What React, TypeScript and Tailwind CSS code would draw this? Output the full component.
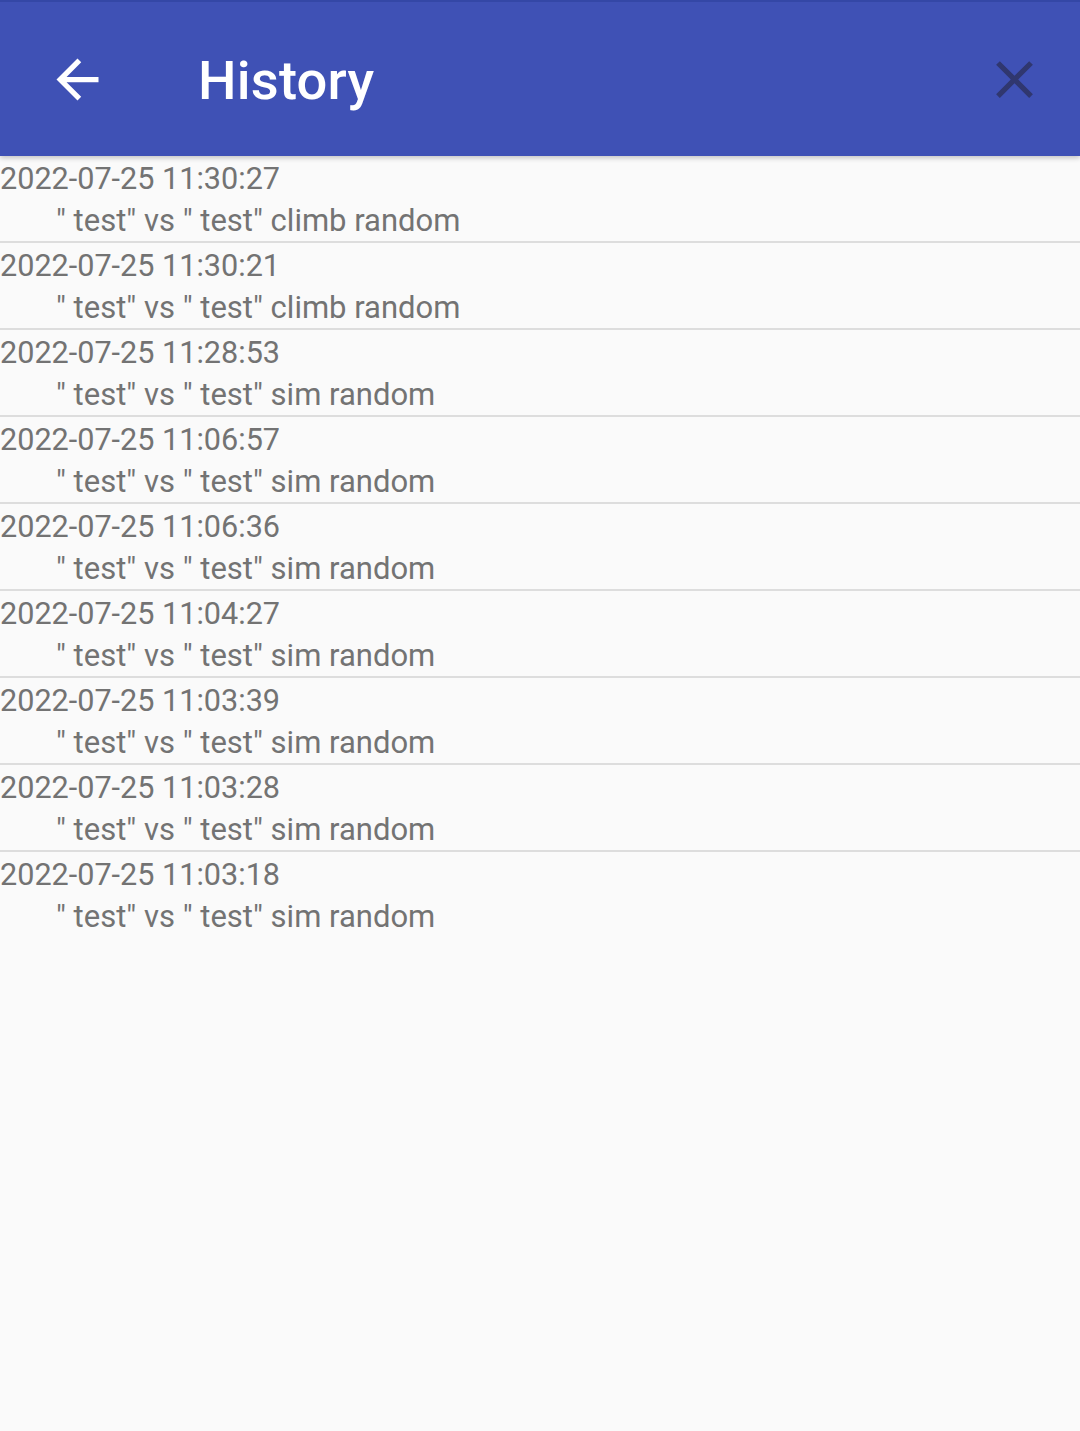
import React from "react";

const rows = [
  ["2022-07-25 11:30:27", "\" test\" vs \" test\" climb random"],
  ["2022-07-25 11:30:21", "\" test\" vs \" test\" climb random"],
  ["2022-07-25 11:28:53", "\" test\" vs \" test\" sim random"],
  ["2022-07-25 11:06:57", "\" test\" vs \" test\" sim random"],
  ["2022-07-25 11:06:36", "\" test\" vs \" test\" sim random"],
  ["2022-07-25 11:04:27", "\" test\" vs \" test\" sim random"],
  ["2022-07-25 11:03:39", "\" test\" vs \" test\" sim random"],
  ["2022-07-25 11:03:28", "\" test\" vs \" test\" sim random"],
  ["2022-07-25 11:03:18", "\" test\" vs \" test\" sim random"],
];

export default function App() {
  return (
    <div
      className="w-[1080px] h-[1431px] bg-[#fafafa] overflow-hidden"
      style={{ fontFamily: "Roboto, 'Noto Sans', sans-serif" }}
    >
      <div className="relative z-10 h-[156px] bg-[#3f51b5] border-t-2 border-[#3447a6] shadow-[0_2px_5px_rgba(0,0,0,0.22)] flex items-center">
        <div className="w-[63px] h-[63px] ml-[46px] flex items-center justify-center">
          <svg viewBox="0 0 24 24" width="63" height="63" fill="#ffffff">
            <path d="M20 11H7.83l5.59-5.59L12 4l-8 8 8 8 1.41-1.41L7.83 13H20v-2z" />
          </svg>
        </div>
        <div className="ml-[89px] mt-[4px] text-white text-[54.3px] font-medium leading-none tracking-[0.2px]">
          History
        </div>
        <div className="ml-auto mr-[34px] w-[63px] h-[63px] flex items-center justify-center">
          <svg viewBox="0 0 24 24" width="63" height="63" fill="#30376f">
            <path d="M19 6.41L17.59 5 12 10.59 6.41 5 5 6.41 10.59 12 5 17.59 6.41 19 12 13.41 17.59 19 19 17.59 13.41 12z" />
          </svg>
        </div>
      </div>
      <div className="flex flex-col">
        {rows.map(([date, desc], i) => (
          <div key={i} className="flex flex-col">
            <div className="h-[85px] flex flex-col text-[#737373]">
              <div className="pt-[2px] leading-[42px] h-[43px] text-[30.6px]">{date}</div>
              <div className="pt-[1px] leading-[41px] h-[42px] pl-[56px] text-[31px]">{desc}</div>
            </div>
            {i < rows.length - 1 && <div className="h-[2px] bg-[#dddddd]" />}
          </div>
        ))}
      </div>
    </div>
  );
}
